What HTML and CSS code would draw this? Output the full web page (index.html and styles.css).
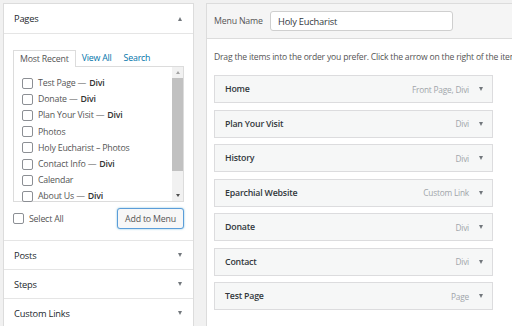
FILE: index.html
```html
<!DOCTYPE html>
<html lang="en">
<head>
    <meta charset="UTF-8">
    <title>Menus</title>
    <link rel="stylesheet" href="styles.css">
</head>
<body>
    <div class="sidebar">
        <div class="section open">
            <div class="section-head">
                <span>Pages</span>
                <span class="arrow up"></span>
            </div>
            <div class="section-body">
                <div class="tabs">
                    <span class="tab active">Most Recent</span>
                    <span class="tab">View All</span>
                    <span class="tab">Search</span>
                </div>
                <div class="list-box">
                    <ul class="checklist">
                        <li><span class="check"></span>Test Page — <b>Divi</b></li>
                        <li><span class="check"></span>Donate — <b>Divi</b></li>
                        <li><span class="check"></span>Plan Your Visit — <b>Divi</b></li>
                        <li><span class="check"></span>Photos</li>
                        <li><span class="check"></span>Holy Eucharist – Photos</li>
                        <li><span class="check"></span>Contact Info — <b>Divi</b></li>
                        <li><span class="check"></span>Calendar</li>
                        <li><span class="check"></span>About Us — <b>Divi</b></li>
                    </ul>
                    <div class="scrollbar">
                        <span class="sb-arrow sb-up"></span>
                        <span class="sb-thumb"></span>
                        <span class="sb-arrow sb-down"></span>
                    </div>
                </div>
                <div class="actions">
                    <label class="select-all"><span class="check"></span>Select All</label>
                    <button class="add-btn">Add to Menu</button>
                </div>
            </div>
        </div>
        <div class="section">
            <div class="section-head"><span>Posts</span><span class="arrow"></span></div>
        </div>
        <div class="section">
            <div class="section-head"><span>Steps</span><span class="arrow"></span></div>
        </div>
        <div class="section">
            <div class="section-head"><span>Custom Links</span><span class="arrow"></span></div>
        </div>
    </div>

    <div class="menu-panel">
        <div class="menu-head">
            <span class="menu-label">Menu Name</span>
            <input class="menu-name" type="text" value="Holy Eucharist">
        </div>
        <div class="menu-body">
            <p class="hint">Drag the items into the order you prefer. Click the arrow on the right of the item to reveal additional configuration options.</p>
            <ul class="menu-items">
                <li class="menu-item"><span class="title">Home</span><span class="meta">Front Page, Divi</span><span class="arrow"></span></li>
                <li class="menu-item"><span class="title">Plan Your Visit</span><span class="meta">Divi</span><span class="arrow"></span></li>
                <li class="menu-item"><span class="title">History</span><span class="meta">Divi</span><span class="arrow"></span></li>
                <li class="menu-item"><span class="title">Eparchial Website</span><span class="meta">Custom Link</span><span class="arrow"></span></li>
                <li class="menu-item"><span class="title">Donate</span><span class="meta">Divi</span><span class="arrow"></span></li>
                <li class="menu-item"><span class="title">Contact</span><span class="meta">Divi</span><span class="arrow"></span></li>
                <li class="menu-item"><span class="title">Test Page</span><span class="meta">Page</span><span class="arrow"></span></li>
            </ul>
        </div>
    </div>
</body>
</html>
```

FILE: styles.css
```css
body {
    margin: 0;
    padding: 3px 0 0 3px;
    display: flex;
    gap: 12px;
    height: 326px;
    box-sizing: border-box;
    overflow: hidden;
    background-color: #f1f1f1;
    font-family: "Open Sans", sans-serif;
    font-size: 8.8px;
    letter-spacing: -0.2px;
    color: #444;
}

ul {
    list-style: none;
    margin: 0;
    padding: 0;
}

/* left column */
.sidebar {
    width: 191px;
    flex-shrink: 0;
    background: #fff;
    border: 1px solid #dcdcdc;
    box-sizing: border-box;
    align-self: flex-start;
}

.section + .section {
    border-top: 1px solid #e5e5e5;
}

.section-head {
    display: flex;
    justify-content: space-between;
    align-items: center;
    height: 28px;
    padding: 0 11px 0 10px;
    font-size: 9.3px;
    color: #23282d;
}

.open .section-head {
    height: 29px;
    border-bottom: 1px solid #e5e5e5;
}

.arrow {
    width: 0;
    height: 0;
    border-left: 2.5px solid transparent;
    border-right: 2.5px solid transparent;
    border-top: 4px solid #72777c;
}

.arrow.up {
    border-top: none;
    border-bottom: 4px solid #72777c;
}

.section-body {
    padding: 15px 9px 11px 9px;
}

.tabs {
    display: flex;
    align-items: flex-end;
    height: 17px;
}

.tab {
    padding: 0 6px;
    line-height: 16px;
    color: #0073aa;
}

.tab.active {
    color: #555;
    border: 1px solid #dcdcdc;
    border-bottom: none;
    background: #fff;
    position: relative;
    top: 1px;
}

.list-box {
    display: flex;
    height: 136px;
    border: 1px solid #dcdcdc;
    box-sizing: border-box;
}

.checklist {
    flex: 1;
    padding: 8px 0 0 8px;
}

.checklist li {
    display: flex;
    align-items: center;
    height: 16.2px;
    white-space: nowrap;
    color: #555;
}

.checklist b {
    color: #333;
    font-weight: 600;
    margin-left: 3px;
}

.check {
    width: 11px;
    height: 11px;
    border: 1px solid #8c8f94;
    border-radius: 2px;
    box-sizing: border-box;
    margin-right: 5px;
    background: #fff;
    flex-shrink: 0;
}

.scrollbar {
    width: 11px;
    background: #f1f1f1;
    display: flex;
    flex-direction: column;
    align-items: center;
}

.sb-arrow {
    width: 0;
    height: 0;
    border-left: 2px solid transparent;
    border-right: 2px solid transparent;
    margin: 4px 0;
}

.sb-up {
    border-bottom: 3px solid #a3a3a3;
}

.sb-down {
    border-top: 3px solid #505050;
    margin-top: auto;
}

.sb-thumb {
    width: 11px;
    height: 93px;
    background: #c1c1c1;
}

.actions {
    display: flex;
    justify-content: space-between;
    align-items: center;
    margin-top: 6px;
}

.select-all {
    display: flex;
    align-items: center;
    color: #555;
}

.add-btn {
    height: 21px;
    width: 67px;
    padding: 0;
    font-family: inherit;
    font-size: 8.8px;
    letter-spacing: -0.2px;
    color: #555;
    background: #f7f7f7;
    border: 1px solid #5b9dd9;
    border-radius: 3px;
    box-shadow: 0 0 2px rgba(30, 140, 190, 0.6);
}

/* menu editor */
.menu-panel {
    width: 330px;
    flex-shrink: 0;
    background: #fff;
    border: 1px solid #dcdcdc;
    box-sizing: border-box;
    align-self: flex-start;
    min-height: 330px;
}

.menu-head {
    display: flex;
    align-items: center;
    height: 34px;
    padding: 0 0 0 7px;
    background: #f5f5f5;
    border-bottom: 1px solid #dcdcdc;
}

.menu-label {
    width: 56px;
    color: #555;
}

.menu-name {
    width: 183px;
    height: 20px;
    box-sizing: border-box;
    padding: 0 7px;
    border: 1px solid #cfcfcf;
    border-radius: 3px;
    font-family: inherit;
    font-size: 9.3px;
    letter-spacing: -0.2px;
    color: #32373c;
}

.menu-body {
    padding: 0 0 0 7px;
}

.hint {
    margin: 12px 0 12px;
    white-space: nowrap;
    overflow: hidden;
    font-size: 8.6px;
    color: #555;
}

.menu-item {
    display: flex;
    align-items: center;
    width: 279px;
    height: 28px;
    box-sizing: border-box;
    padding: 0 9px 0 10px;
    margin-bottom: 6.5px;
    background: #f6f7f7;
    border: 1px solid #dcdcde;
}

.menu-item .title {
    flex: 1;
    font-weight: 600;
    color: #32373c;
}

.menu-item .meta {
    color: #a0a5aa;
    font-size: 8.3px;
    margin-right: 10px;
}
```
